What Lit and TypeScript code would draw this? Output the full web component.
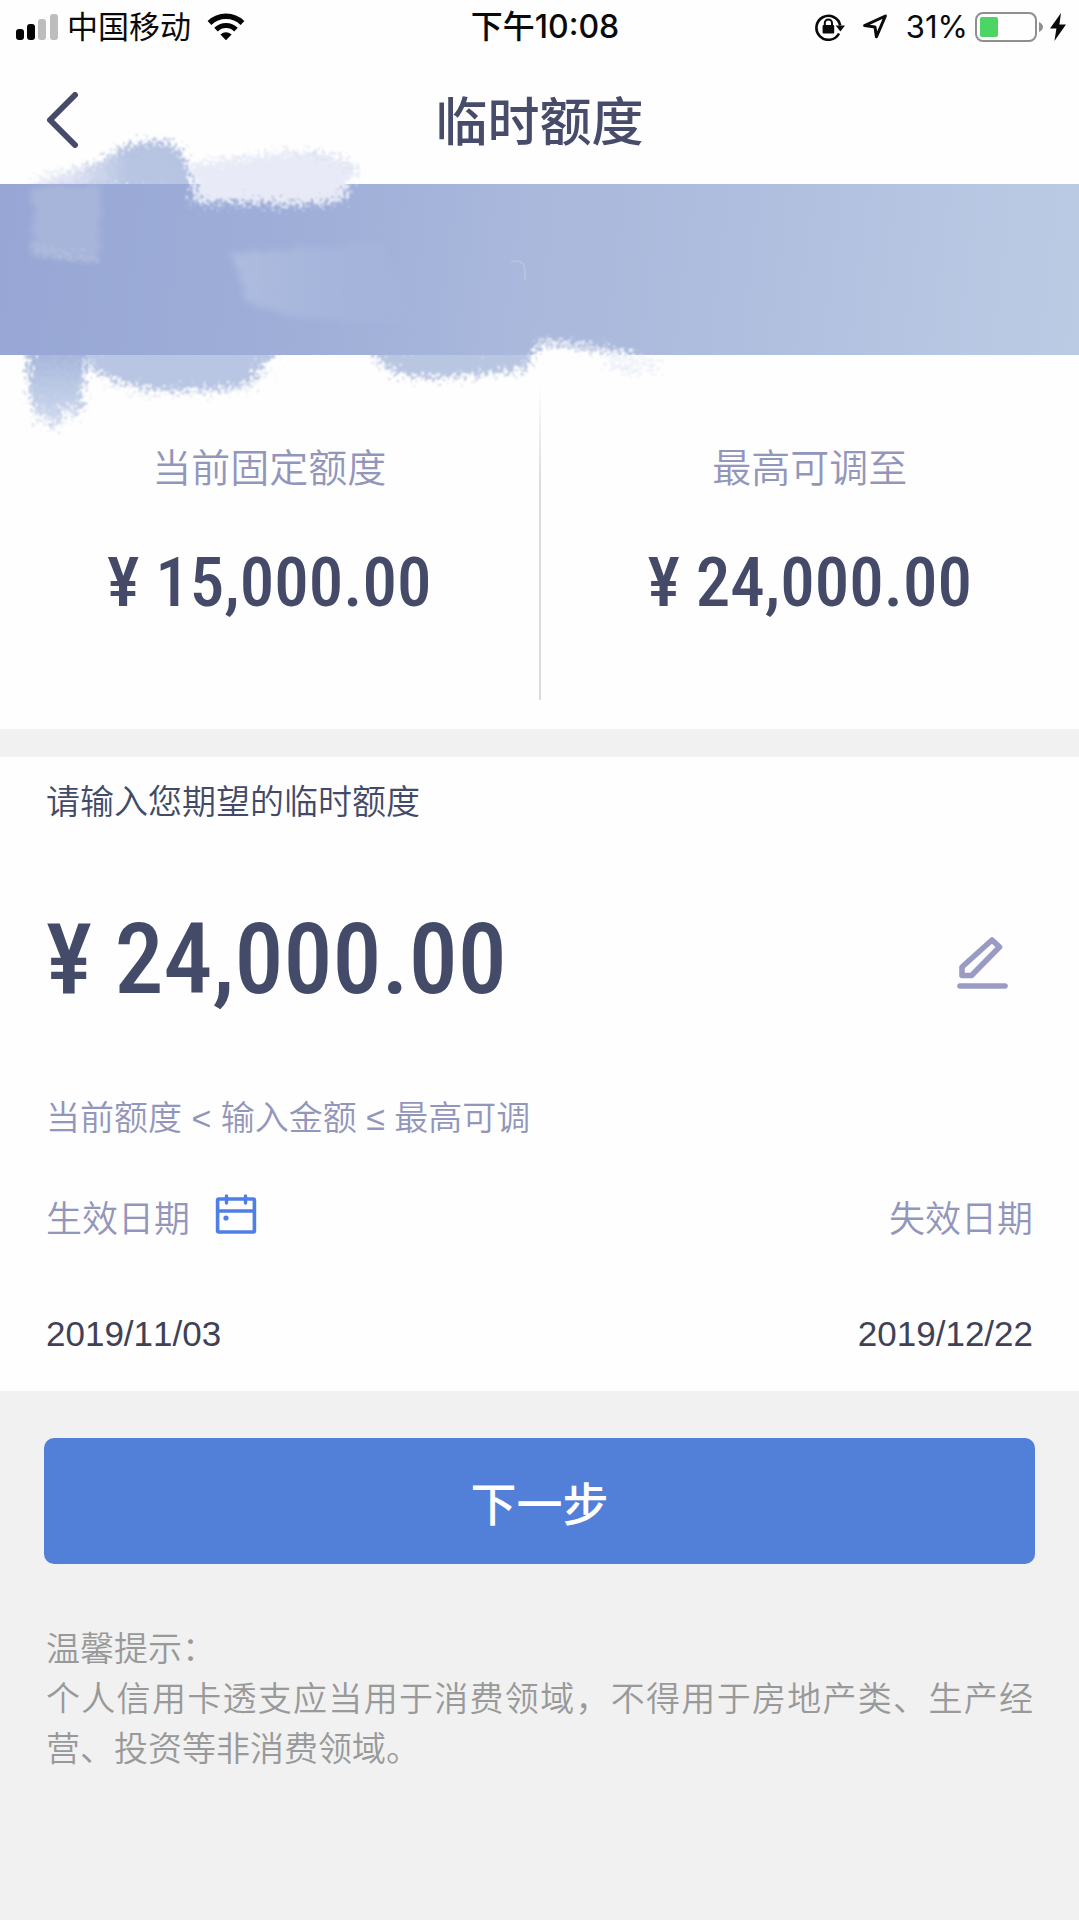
import { LitElement, html, css, svg } from "lit";
import { customElement, property, state } from "lit/decorators.js";

const base = css`
  :host {
    display: block;
    box-sizing: border-box;
  }
  *,
  *::before,
  *::after {
    box-sizing: border-box;
  }
  svg {
    display: block;
    flex: none;
  }
  button {
    margin: 0;
    padding: 0;
    border: 0;
    background: none;
    font: inherit;
    color: inherit;
    cursor: pointer;
  }
`;

@customElement("status-bar")
export class StatusBar extends LitElement {
  @property() carrier = "";
  @property() time = "";
  @property({ type: Number }) battery = 0;

  static styles = [
    base,
    css`
      .bar {
        display: grid;
        grid-template-columns: 1fr auto 1fr;
        align-items: center;
        height: 56px;
        padding: 0 13px 2px 16px;
        color: #0a0a0a;
        font-size: 31px;
        line-height: 40px;
      }
      .side {
        display: flex;
        align-items: center;
      }
      .carrier {
        margin: 0 16px 0 9px;
      }
      .time {
        padding-left: 8px;
        font-size: 32px;
        font-weight: 500;
      }
      .end {
        justify-content: flex-end;
      }
      .lock {
        margin-right: 17px;
      }
      .arrow {
        margin-right: 18px;
      }
      .percent {
        margin-right: 7px;
      }
      .bolt {
        margin-left: 7px;
      }
    `,
  ];

  render() {
    return html`
      <div class="bar">
        <div class="side">
          <svg width="42" height="26" viewBox="0 0 42 26" aria-hidden="true">
            <rect x="0" y="15" width="8" height="11" rx="3" fill="#050505" />
            <rect x="11" y="10" width="8" height="16" rx="3" fill="#050505" />
            <rect x="22" y="5" width="8" height="21" rx="3" fill="#bdbdbd" />
            <rect x="34" y="0" width="8" height="26" rx="3" fill="#bdbdbd" />
          </svg>
          <span class="carrier">${this.carrier}</span>
          <svg width="38" height="28" viewBox="0 0 38 28" aria-hidden="true">
            <path d="M2.5 10 A23.5 23.5 0 0 1 35.5 10" fill="none" stroke="#050505" stroke-width="5.4" />
            <path d="M9 16.6 A14.4 14.4 0 0 1 29 16.6" fill="none" stroke="#050505" stroke-width="5" />
            <path d="M13.4 21.4 Q19 17 24.6 21.4 L19 27.2 Z" fill="#050505" />
          </svg>
        </div>
        <span class="time">${this.time}</span>
        <div class="side end">
          <svg class="lock" width="30" height="28" viewBox="0 0 30 28" aria-hidden="true">
            <path d="M24 20.5 A12 12 0 1 1 25.2 12.5" fill="none" stroke="#0a0a0a" stroke-width="2.6" />
            <path d="M20.6 12.4 H30 L25.4 18.6 Z" fill="#0a0a0a" />
            <rect x="7.6" y="12" width="11.6" height="8.6" rx="1" fill="#0a0a0a" />
            <path d="M9.8 12.5 V10 A3.6 3.6 0 0 1 17 10 V12.5" fill="none" stroke="#0a0a0a" stroke-width="2" />
          </svg>
          <svg class="arrow" width="26" height="26" viewBox="0 0 26 26" aria-hidden="true">
            <path d="M23.4 2 L2.6 11.6 L13 13 L14.4 22.8 Z" fill="none" stroke="#0a0a0a" stroke-width="3" stroke-linejoin="round" />
          </svg>
          <span class="percent">${this.battery}%</span>
          <svg width="68" height="30" viewBox="0 0 68 30" aria-hidden="true">
            <rect x="1" y="1" width="60" height="28" rx="7" fill="#fefefe" stroke="#8f8f8f" stroke-width="2" />
            <rect x="5" y="5" width=${Math.round((this.battery / 100) * 58)} height="20" rx="2" fill="#4cd564" />
            <path d="M64 10 Q68 12 68 15 Q68 18 64 20 Z" fill="#8f8f8f" />
          </svg>
          <svg class="bolt" width="16" height="28" viewBox="0 0 16 28" aria-hidden="true">
            <path d="M11 0 L0 15.4 H6.4 L4.4 28 L16 11.4 H9.4 Z" fill="#0a0a0a" />
          </svg>
        </div>
      </div>
    `;
  }
}

/* Brushed banner: a gradient strip with dry-brush strokes across its edges. */
@customElement("brush-banner")
export class BrushBanner extends LitElement {
  static styles = [
    base,
    css`
      .strip {
        position: relative;
        height: 171px;
        background: linear-gradient(97deg, #97a6d5 0%, #9fafd8 30%, #a8b7db 46%, #afbede 68%, #bccbe4 100%);
      }
      .strokes {
        position: absolute;
        left: 0;
        top: -64px;
        pointer-events: none;
      }
    `,
  ];

  private strokes = svg`
    <defs>
      <filter id="rough" x="-10%" y="-30%" width="120%" height="160%">
        <feTurbulence type="fractalNoise" baseFrequency="0.28" numOctaves="3" seed="4" result="n" />
        <feDisplacementMap in="SourceGraphic" in2="n" scale="32" xChannelSelector="R" yChannelSelector="G" />
        <feGaussianBlur stdDeviation="1" />
      </filter>
      <filter id="soft" x="-20%" y="-20%" width="140%" height="140%">
        <feTurbulence type="fractalNoise" baseFrequency="0.1" numOctaves="2" seed="9" result="n" />
        <feDisplacementMap in="SourceGraphic" in2="n" scale="14" xChannelSelector="R" yChannelSelector="G" />
        <feGaussianBlur stdDeviation="3" />
      </filter>
      <linearGradient id="fadeUp" x1="0" y1="0" x2="1" y2="0">
        <stop offset="0" stop-color="#e9ecf7" stop-opacity="0.5" />
        <stop offset="0.4" stop-color="#cfd7ec" />
        <stop offset="0.6" stop-color="#b8c5e2" />
        <stop offset="1" stop-color="#b6c3e1" />
      </linearGradient>
      <linearGradient id="fadeDown" x1="0" y1="0" x2="0" y2="1">
        <stop offset="0" stop-color="#a3b2d9" />
        <stop offset="0.4" stop-color="#b6c5e2" />
        <stop offset="1" stop-color="#d3dcef" />
      </linearGradient>
      <linearGradient id="fadeRight" x1="0" y1="0" x2="1" y2="0">
        <stop offset="0" stop-color="#b5c3e2" stop-opacity="0.7" />
        <stop offset="1" stop-color="#b0bedf" stop-opacity="0" />
      </linearGradient>
      <clipPath id="above"><rect x="0" y="0" width="660" height="64" /></clipPath>
      <clipPath id="below"><rect x="0" y="235" width="660" height="95" /></clipPath>
    </defs>
    <g clip-path="url(#above)">
      <path filter="url(#rough)" fill="url(#fadeUp)"
        d="M28 68 L42 56 L100 42 L122 28 L145 22 L165 22 L180 30 L190 48 L194 72 Z" />
      <path filter="url(#rough)" fill="none" stroke="#a9b9dc" stroke-width="2" stroke-dasharray="4 5"
        d="M112 36 L140 24 L168 22 L184 38 M126 34 L160 28 L178 42" />
    </g>
    <path filter="url(#soft)" fill="#adbadc" opacity="0.75" d="M32 66 H102 L98 143 L32 134 Z" />
    <path filter="url(#rough)" fill="none" stroke="#c3cee6" stroke-width="3" opacity="0.6" d="M32 126 L56 134 L98 140" />
    <path filter="url(#rough)" fill="#e8ebf7"
      d="M190 46 L200 42 L290 31 L322 32 L348 40 L358 54 L347 62 L346 80 L300 85 L240 82 L192 82 L196 66 Z" />
    <path filter="url(#rough)" fill="none" stroke="#c6d0e8" stroke-width="2" stroke-dasharray="5 6"
      d="M300 34 L330 38 L358 52 M190 84 L260 86 L340 84" />
    <path filter="url(#soft)" fill="url(#fadeRight)" d="M232 134 L380 122 L420 204 L290 196 L246 180 Z" />
    <g clip-path="url(#below)">
      <path filter="url(#rough)" fill="url(#fadeDown)"
        d="M28 226 H92 L84 258 L82 288 L76 296 L66 284 L60 302 L52 308 L47 290 L38 298 L31 280 L28 256 Z" />
      <path filter="url(#rough)" fill="none" stroke="#cbd6eb" stroke-width="2"
        d="M34 284 L40 304 M46 288 L52 312 M56 286 L58 308 M68 282 L72 302" />
      <path filter="url(#rough)" fill="#b9c6e3"
        d="M84 226 H284 L264 244 L250 264 L216 270 L150 270 L112 260 L90 248 Z" />
      <path filter="url(#rough)" fill="none" stroke="#d3dcee" stroke-width="2" stroke-dasharray="7 5"
        d="M108 266 L150 273 L246 270 L274 248" />
      <path filter="url(#rough)" fill="#b9c6e2"
        d="M368 226 H540 L528 248 L480 256 L410 258 L382 246 Z" />
    </g>
    <path filter="url(#rough)" fill="#fefefe" d="M538 226 L552 224 L630 234 L644 242 L640 250 L540 246 L532 240 Z" />
    <path filter="url(#rough)" fill="none" stroke="#dde3f1" stroke-width="5" opacity="0.85"
      d="M536 222 L580 226 L640 238 M610 244 L640 252 M644 240 L660 250" />
    <path fill="none" stroke="#bfcbe3" stroke-width="2" opacity="0.6" d="M511 142 Q524 138 525 150 V160" />
  `;

  render() {
    return html`
      <div class="strip">
        <svg class="strokes" width="680" height="330" viewBox="0 0 680 330" aria-hidden="true">${this.strokes}</svg>
      </div>
    `;
  }
}

@customElement("limit-card")
export class LimitCard extends LitElement {
  @property() label = "";
  @property() amount = "";

  static styles = [
    base,
    css`
      .card {
        display: flex;
        flex-direction: column;
        align-items: center;
        gap: 50px;
        padding-top: 88px;
      }
      .label {
        color: #9396bb;
        font-size: 39px;
        font-weight: 350;
        line-height: 50px;
      }
      .amount {
        color: #444a68;
        font-family: "Roboto Condensed", Roboto, sans-serif;
        font-size: 69px;
        font-weight: 500;
        line-height: 80px;
        white-space: nowrap;
      }
    `,
  ];

  render() {
    return html`
      <div class="card">
        <span class="label">${this.label}</span>
        <span class="amount">¥ ${this.amount}</span>
      </div>
    `;
  }
}

@customElement("app-root")
export class AppRoot extends LitElement {
  @state() private amount = "¥ 24,000.00";
  @state() private startDate = "2019/11/03";
  @state() private endDate = "2019/12/22";

  static styles = [
    base,
    css`
      :host {
        display: flex;
        flex-direction: column;
        min-height: 100vh;
        background: #f1f1f1;
        color: #434a67;
        font-family: Inter, "Noto Sans CJK SC", sans-serif;
      }
      header,
      .limits,
      .form {
        background: #fefefe;
      }
      .nav {
        display: grid;
        grid-template-columns: 1fr auto 1fr;
        align-items: center;
        height: 128px;
        padding: 0 43px;
      }
      .back {
        justify-self: start;
      }
      h1 {
        margin: 0;
        padding-top: 6px;
        color: #474c6b;
        font-size: 52px;
        font-weight: 500;
        line-height: 72px;
      }
      .limits {
        display: grid;
        grid-template-columns: 1fr 2px 1fr;
        height: 374px;
        margin-bottom: 28px;
      }
      .rule {
        margin: 30px 0 29px;
        background: linear-gradient(#fefefe, #dcdcdf 30%, #dcdcdf);
      }
      .form {
        display: flex;
        flex-direction: column;
        padding: 20px 46px 32px;
      }
      .prompt {
        font-size: 34px;
        font-weight: 350;
        line-height: 50px;
      }
      .entry {
        display: flex;
        align-items: center;
        justify-content: space-between;
        gap: 24px;
        margin-top: 76px;
        padding-right: 24px;
      }
      .amount {
        flex: 1;
        min-width: 0;
        height: 120px;
        padding: 0 0 8px;
        border: 0;
        outline: none;
        background: none;
        color: #434b69;
        font-family: "Roboto Condensed", Roboto, sans-serif;
        font-size: 98px;
        font-weight: 500;
      }
      .hint {
        margin: 70px 0 51px;
        color: #9396bb;
        font-family: "Liberation Sans", "Noto Sans CJK SC", sans-serif;
        font-size: 34px;
        font-weight: 350;
        line-height: 50px;
      }
      .dates {
        display: flex;
        justify-content: space-between;
        margin: 0;
      }
      .date {
        display: flex;
        flex-direction: column;
        gap: 65px;
      }
      .date.last {
        align-items: flex-end;
      }
      dt {
        display: flex;
        align-items: flex-start;
        gap: 25px;
        color: #9396bb;
        font-size: 36px;
        font-weight: 350;
        line-height: 50px;
      }
      dd {
        margin: 0;
        color: #3f4256;
        font-family: "Liberation Sans", sans-serif;
        font-size: 35px;
        font-kerning: none;
        line-height: 50px;
      }
      footer {
        padding: 47px 44px;
      }
      .next {
        display: block;
        width: 100%;
        height: 126px;
        border-radius: 10px;
        background: #527fd8;
        color: #ffffff;
        font-size: 46px;
        font-weight: 500;
      }
      .tips {
        margin: 60px 2px 0;
        color: #999999;
        font-size: 34px;
        font-weight: 350;
        line-height: 50px;
        text-align: justify;
      }
      .tips p {
        margin: 0;
      }
    `,
  ];

  render() {
    return html`
      <header>
        <status-bar carrier="中国移动" time="下午10:08" battery="31"></status-bar>
        <nav class="nav">
          <button class="back" aria-label="返回">
            <svg width="40" height="56" viewBox="0 0 40 56" aria-hidden="true">
              <path d="M32 3 L7 28 L32 53" fill="none" stroke="#474a68" stroke-width="6" stroke-linecap="round" stroke-linejoin="round" />
            </svg>
          </button>
          <h1>临时额度</h1>
        </nav>
      </header>
      <brush-banner></brush-banner>
      <section class="limits">
        <limit-card label="当前固定额度" amount="15,000.00"></limit-card>
        <div class="rule"></div>
        <limit-card label="最高可调至" amount="24,000.00"></limit-card>
      </section>
      <section class="form">
        <label class="prompt" for="amount">请输入您期望的临时额度</label>
        <div class="entry">
          <input
            class="amount"
            id="amount"
            type="text"
            .value=${this.amount}
            @input=${(e: Event) => (this.amount = (e.target as HTMLInputElement).value)}
          />
          <button aria-label="编辑" @click=${this.focusAmount}>
            <svg width="54" height="56" viewBox="0 0 54 56" aria-hidden="true">
              <path d="M37 5 L44.5 12 L16.5 40.5 H7 V32 Z" fill="none" stroke="#9a9bc4" stroke-width="5.6" stroke-linejoin="round" />
              <path d="M5 51 H50" stroke="#9a9bc4" stroke-width="5.6" stroke-linecap="round" />
            </svg>
          </button>
        </div>
        <p class="hint">当前额度 &lt; 输入金额 ≤ 最高可调</p>
        <dl class="dates">
          <div class="date">
            <dt>
              生效日期
              <button aria-label="选择生效日期">
                <svg width="42" height="42" viewBox="0 0 42 42" aria-hidden="true">
                  <rect x="2.6" y="5" width="36.8" height="33" rx="1" fill="none" stroke="#4f7fe6" stroke-width="3.6" />
                  <path d="M2.6 17 H39.4 M11.5 2 V9 M30.5 2 V9" fill="none" stroke="#4f7fe6" stroke-width="3.4" stroke-linecap="round" />
                  <circle cx="11" cy="24" r="2.6" fill="#4f7fe6" />
                </svg>
              </button>
            </dt>
            <dd>${this.startDate}</dd>
          </div>
          <div class="date last">
            <dt>失效日期</dt>
            <dd>${this.endDate}</dd>
          </div>
        </dl>
      </section>
      <footer>
        <button class="next">下一步</button>
        <div class="tips">
          <p>温馨提示：</p>
          <p>个人信用卡透支应当用于消费领域，不得用于房地产类、生产经营、投资等非消费领域。</p>
        </div>
      </footer>
    `;
  }

  private focusAmount() {
    this.renderRoot.querySelector<HTMLInputElement>("#amount")?.focus();
  }
}
